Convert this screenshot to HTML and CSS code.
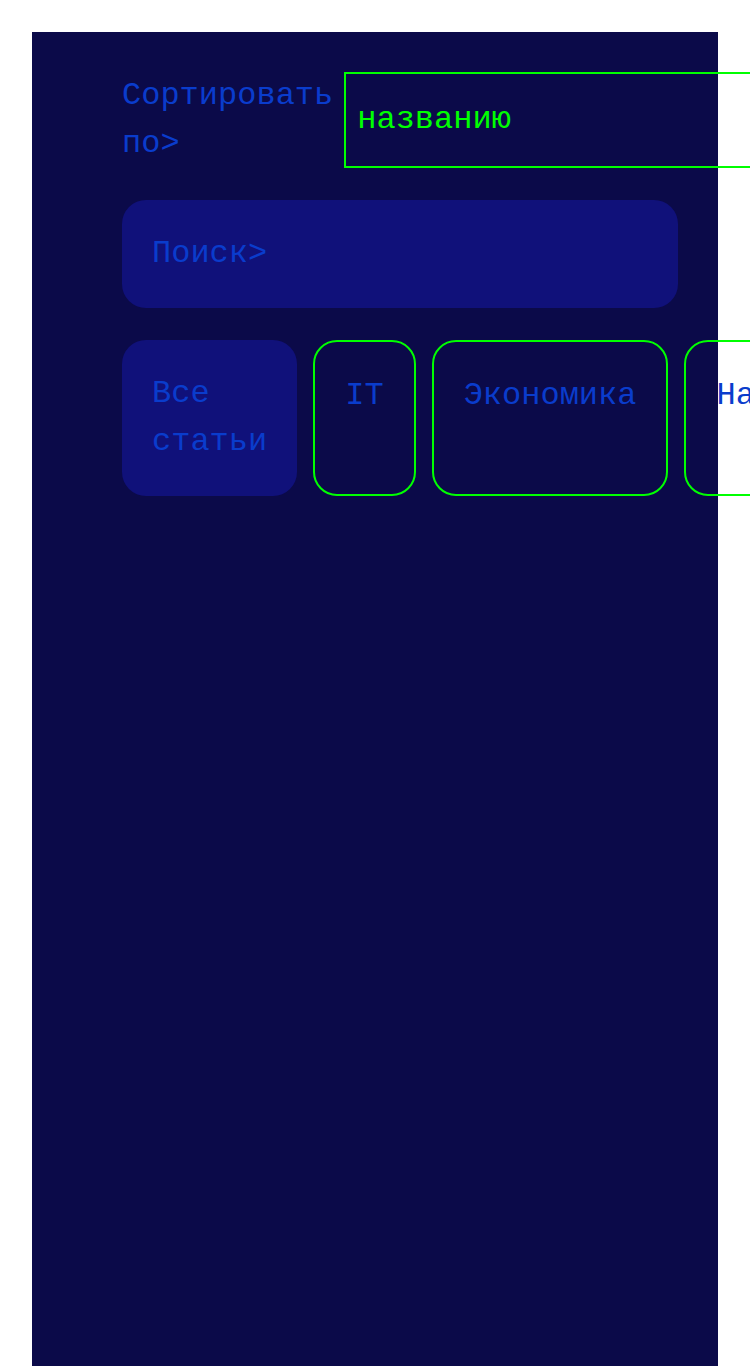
FILE: index.html
```html
<!DOCTYPE html>
<html lang="ru">
<head>
<meta charset="utf-8">
<title>Статьи</title>
<link rel="stylesheet" href="styles.css">
</head>
<body>
<main class="panel">
  <div class="sort-row">
    <label class="sort-label">Сортировать по&gt;</label>
    <div class="sort-select">названию</div>
  </div>
  <div class="search">Поиск&gt;</div>
  <div class="chips">
    <div class="chip chip-active">Все статьи</div>
    <div class="chip">IT</div>
    <div class="chip">Экономика</div>
    <div class="chip">Наука</div>
  </div>
</main>
</body>
</html>
```
FILE: styles.css
```css
html, body {
  margin: 0;
  padding: 0;
  background: #ffffff;
}
body {
  padding: 32px 32px 0 32px;
  font-family: "Liberation Mono", "DejaVu Sans Mono", monospace;
  font-size: 32px;
  line-height: 48px;
}
.panel {
  background: #0b0a49;
  min-height: 1334px;
  box-sizing: border-box;
  padding: 40px 40px 40px 90px;
  display: flex;
  flex-direction: column;
  gap: 32px;
}
.sort-row {
  display: flex;
  align-items: flex-start;
  gap: 11px;
}
.sort-label {
  color: #0a3ccc;
  flex: none;
  width: min-content;
}
.sort-select {
  flex: none;
  width: 560px;
  height: 96px;
  box-sizing: border-box;
  border: 2px solid #00ff00;
  color: #00ff00;
  padding: 22px 11px;
}
.search {
  background: #10117a;
  border-radius: 24px;
  padding: 30px;
  color: #0a3ccc;
}
.chips {
  display: flex;
  gap: 16px;
  height: 156px;
}
.chip {
  flex: 0 1 auto;
  min-width: min-content;
  border: 2px solid #00ff00;
  border-radius: 24px;
  padding: 30px;
  color: #0a3ccc;
}
.chip-active {
  background: #10117a;
  border: none;
}
```
